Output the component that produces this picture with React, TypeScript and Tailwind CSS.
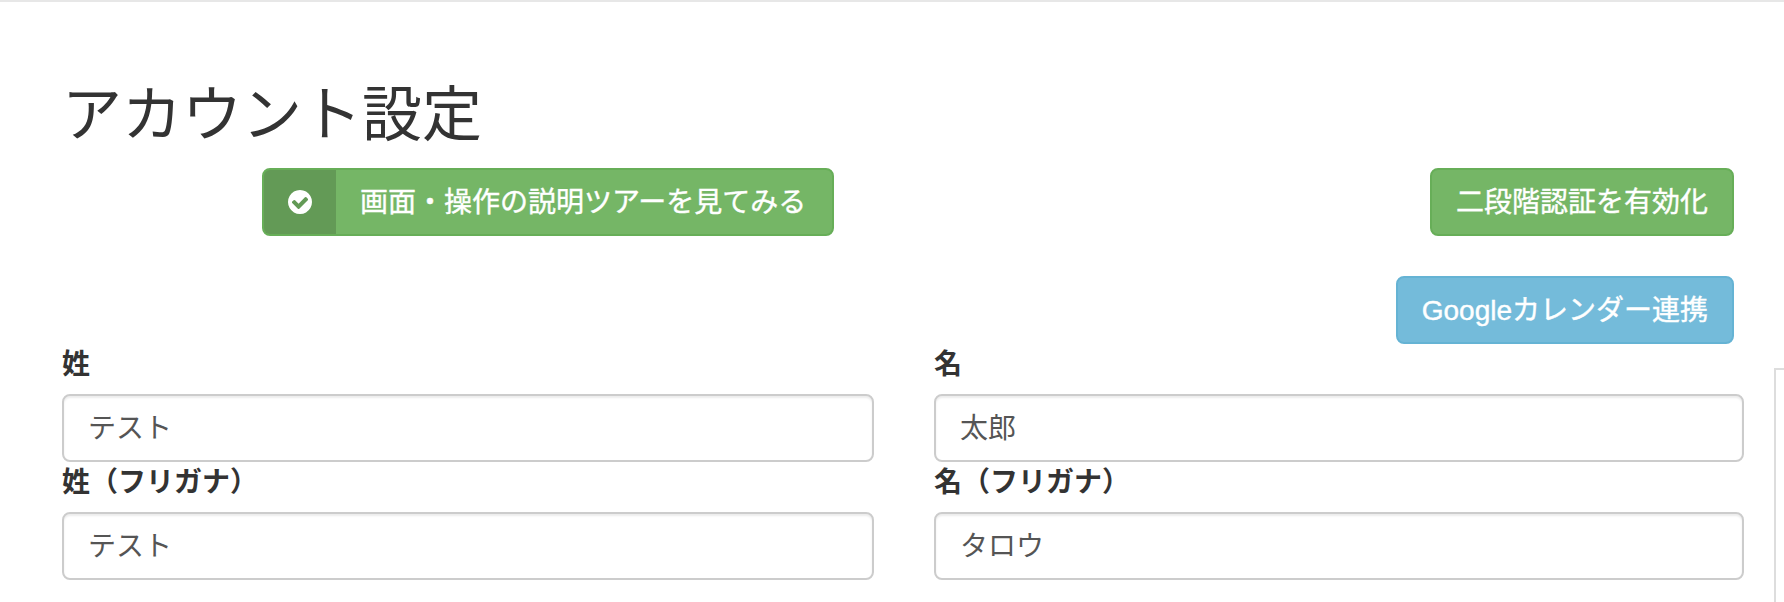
import React from 'react';

interface FieldProps {
  label: string;
  value: string;
}

const Field: React.FC<FieldProps> = ({ label, value }) => (
  <div>
    <label className="block h-10 mb-2.5 pt-px font-bold leading-10">{label}</label>
    <input
      type="text"
      defaultValue={value}
      className="block w-full h-[68px] px-6 pb-1 rounded-lg border-2 border-[#ccc] bg-white text-[#555] shadow-[inset_0_2px_2px_rgba(0,0,0,0.075)] outline-none"
    />
  </div>
);

const CheckCircle: React.FC = () => (
  <svg viewBox="0 0 1536 1536" className="w-6 h-6 fill-white">
    <path d="M1284 606q0-28-18-46l-91-90q-19-19-45-19t-45 19L677 877 451 651q-19-19-45-19t-45 19l-91 90q-18 18-18 46 0 27 18 45l362 362q19 19 45 19 27 0 46-19l543-543q18-18 18-45zM1536 768q0 209-103 385.500T1153.500 1433 768 1536t-385.500-103T103 1153.500 0 768t103-385.500T382.500 103 768 0t385.500 103T1433 382.500 1536 768z" />
  </svg>
);

const App: React.FC = () => {
  return (
    <div className="h-[602px] overflow-hidden bg-white border-t-2 border-[#e7e7e7] text-[28px] leading-10 text-[#333] font-['Liberation_Sans','Noto_Sans_CJK_JP',sans-serif]">
      <div className="flex h-full">
        <main className="w-[1774px] shrink-0 pl-[62px] pr-[30px] pt-20">
          <h1 className="h-[66px] pt-px text-[60px] leading-[66px]">アカウント設定</h1>

          <div className="flex justify-between mt-5 pl-[200px] pr-2.5">
            <button className="flex w-[572px] h-[68px] rounded-lg border-2 border-[#67ae58] bg-[#75b666] text-white overflow-hidden">
              <span className="flex w-[72px] h-full items-center justify-center bg-black/15">
                <CheckCircle />
              </span>
              <span className="px-6 pt-px leading-16 whitespace-nowrap [-webkit-text-stroke:0.4px]">画面・操作の説明ツアーを見てみる</span>
            </button>
            <div className="flex flex-col items-end gap-10">
              <button className="h-[68px] px-6 pt-0.5 rounded-lg border-2 border-[#67ae58] bg-[#75b666] text-white whitespace-nowrap [-webkit-text-stroke:0.4px]">
                二段階認証を有効化
              </button>
              <button className="h-[68px] px-6 pt-0.5 rounded-lg border-2 border-[#65b3d4] bg-[#74bbda] text-white whitespace-nowrap [-webkit-text-stroke:0.4px]">
                Googleカレンダー連携
              </button>
            </div>
          </div>

          <div className="grid grid-cols-[812px_810px] gap-x-[60px]">
            <Field label="姓" value="テスト" />
            <Field label="名" value="太郎" />
            <Field label="姓（フリガナ）" value="テスト" />
            <Field label="名（フリガナ）" value="タロウ" />
          </div>
        </main>

        <aside className="mt-[366px] grow border-t-2 border-l-2 border-[#ddd]" />
      </div>
    </div>
  );
};

export default App;
